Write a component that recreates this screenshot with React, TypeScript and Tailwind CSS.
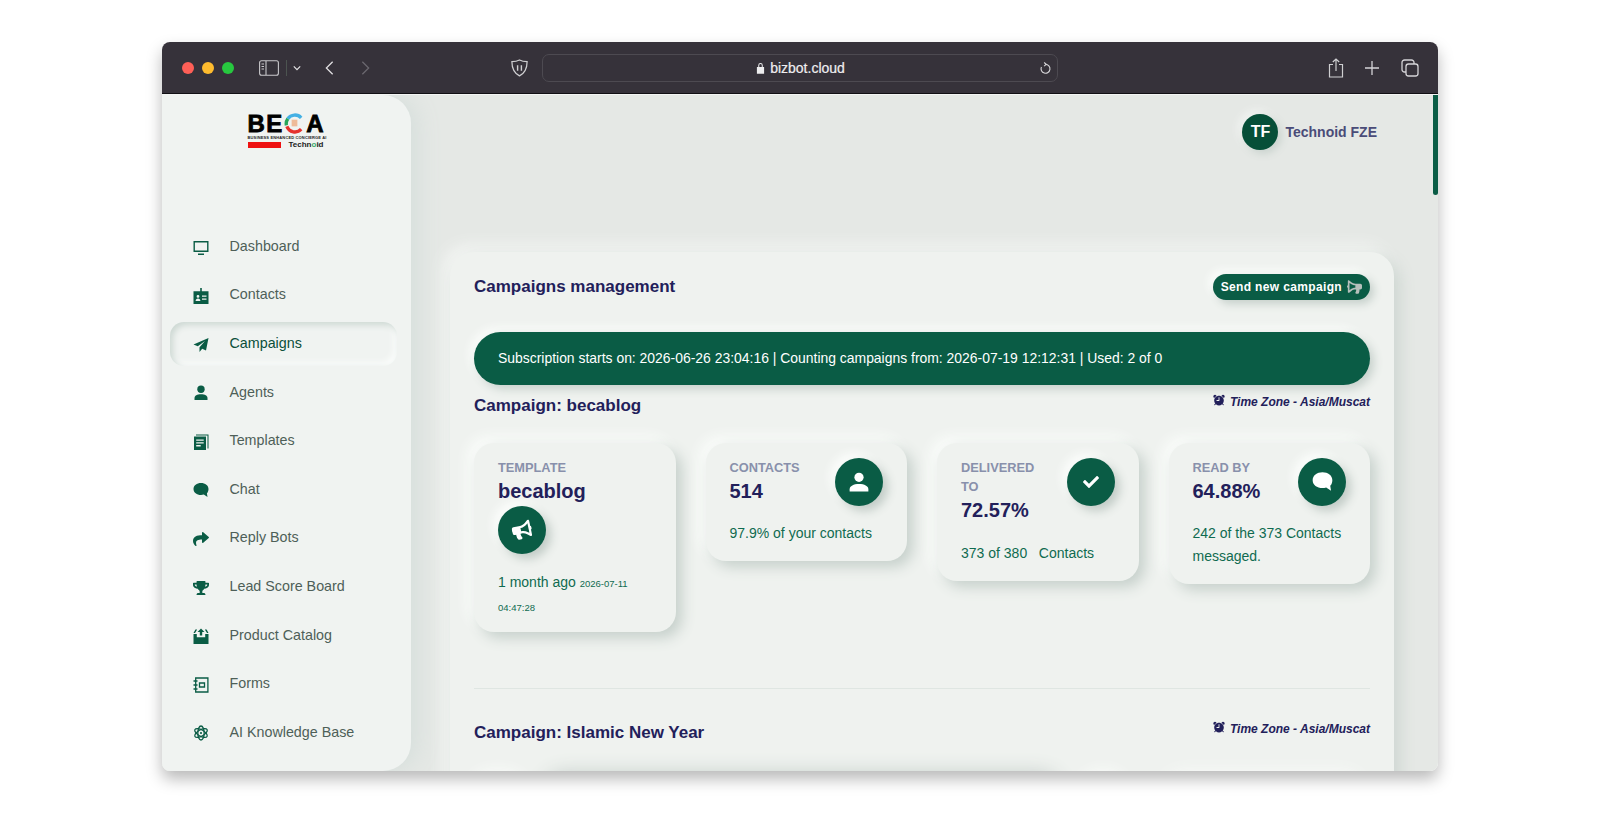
import React from "react";
import { FaShare, FaTrophy, FaBullhorn, FaCheck } from "react-icons/fa";
import { IoAlarm } from "react-icons/io5";

const cardShadow = "shadow-[6px_6px_14px_#c6d0cb,-6px_-6px_14px_#fbfdfb]";

// small monochrome nav icons, all on a 16 box
const DesktopIcon = () => (
  <svg viewBox="0 0 16 16" className="h-4 w-4 text-[#0a5c45]" fill="currentColor">
    <path d="M0.5 1h15v11h-15zM1.9 2.4v8.2h12.2V2.4zM5 13.6h6V15H5z" fillRule="evenodd" />
  </svg>
);
const BadgeIcon = () => (
  <svg viewBox="0 0 16 16" className="h-4 w-4 text-[#0a5c45]" fill="currentColor">
    <path
      fillRule="evenodd"
      d="M7.2 0h1.6v3.2H15.5V16H.5V3.2h6.7zM5 7a1.4 1.4 0 1 0 0 2.8A1.4 1.4 0 0 0 5 7zM2.6 13h4.8c0-1.6-1-2.5-2.4-2.5S2.6 11.400 2.600 13zM9 7.500v1.300h4.500V7.500zM9 10.500v1.300h4.500v-1.300z"
    />
  </svg>
);
const PlaneIcon = () => (
  <svg viewBox="0 0 16 16" className="h-4 w-4 text-[#0a5c45]" fill="currentColor">
    <path d="M15.500 1 .500 7.500l4.300 1.800L12 4 6.500 10.300V15l2.700-3.300 3.800 1.800z" />
  </svg>
);
const PersonIcon = () => (
  <svg viewBox="0 0 16 16" className="h-4 w-4 text-[#0a5c45]" fill="currentColor">
    <circle cx="8" cy="4.200" r="3.700" />
    <path d="M1.500 15v-2c0-2.400 2.600-3.800 6.500-3.800s6.500 1.400 6.500 3.800v2z" />
  </svg>
);
const DocsIcon = () => (
  <svg viewBox="0 0 16 16" className="h-4 w-4 text-[#0a5c45]" fill="currentColor">
    <path d="M3 .5h12.500V14.500h-1V1.500H3z" />
    <path
      fillRule="evenodd"
      d="M1 2.500h12V16H1zM3.200 5.500v1.300h7.500V5.500zM3.200 8.300v1.300h7.500V8.300zM3.200 11.100v1.300h4.500v-1.300z"
    />
  </svg>
);
const ChatIcon = ({ className = "h-4 w-4 text-[#0a5c45]" }: { className?: string }) => (
  <svg viewBox="0 0 16 16" className={className} fill="currentColor">
    <path d="M8 1C3.800 1 .500 3.500.500 7S3.800 13 8 13c.9 0 1.900-.1 2.800-.4l3.700 2.400-.6-3.700C15 10.200 15.500 8.700 15.500 7 15.500 3.500 12.200 1 8 1z" />
  </svg>
);
const BoxIcon = () => (
  <svg viewBox="0 0 16 16" className="h-4 w-4 text-[#0a5c45]" fill="currentColor">
    <path d="M8 .5 11.500 4H9.200v3.500H6.800V4H4.500zM.5 6h3.300v3.200h8.400V6h3.300v10H.500zM2.400 1.500h1.800L2 5H.500zM11.800 1.500h1.800L15.500 5H14z" />
  </svg>
);
const NotebookIcon = () => (
  <svg viewBox="0 0 16 16" className="h-4 w-4 text-[#0a5c45]" fill="none" stroke="currentColor" strokeWidth="1.300">
    <path d="M2.700 1h12.200v14H2.700z" />
    <path d="M.5 4h4M.5 8h4M.5 12h4" />
    <path d="M6.500 6h5v4h-5z" />
  </svg>
);
const AtomIcon = () => (
  <svg viewBox="0 0 16 16" className="h-4 w-4 text-[#0a5c45]" fill="none" stroke="currentColor" strokeWidth="1.300">
    <ellipse cx="8" cy="8" rx="7" ry="3.200" transform="rotate(30 8 8)" />
    <ellipse cx="8" cy="8" rx="7" ry="3.200" transform="rotate(-30 8 8)" />
    <ellipse cx="8" cy="8" rx="7" ry="3.200" transform="rotate(90 8 8)" />
    <circle cx="8" cy="8" r="1.100" fill="currentColor" stroke="none" />
  </svg>
);

const navItems = [
  { label: "Dashboard", icon: <DesktopIcon /> },
  { label: "Contacts", icon: <BadgeIcon /> },
  { label: "Campaigns", icon: <PlaneIcon />, active: true },
  { label: "Agents", icon: <PersonIcon /> },
  { label: "Templates", icon: <DocsIcon /> },
  { label: "Chat", icon: <ChatIcon /> },
  { label: "Reply Bots", icon: <FaShare className="h-4 w-4 text-[#0a5c45]" /> },
  { label: "Lead Score Board", icon: <FaTrophy className="h-4 w-4 text-[#0a5c45]" /> },
  { label: "Product Catalog", icon: <BoxIcon /> },
  { label: "Forms", icon: <NotebookIcon /> },
  { label: "AI Knowledge Base", icon: <AtomIcon /> },
];

const BrowserBar = () => (
  <div className="flex h-[52px] shrink-0 items-center border-b border-[#111014] bg-[#36323a] pl-[20px] pr-[19px]">
    <div className="flex gap-[8px]">
      <span className="h-3 w-3 rounded-full bg-[#fe5f57]" />
      <span className="h-3 w-3 rounded-full bg-[#febb2e]" />
      <span className="h-3 w-3 rounded-full bg-[#27c83f]" />
    </div>
    <svg viewBox="0 0 20 16" className="ml-[25px] h-[16px] w-[20px] text-[#c9c8cb]" fill="none" stroke="currentColor" strokeWidth="1.100">
      <rect x="0.600" y="0.800" width="18.800" height="14.400" rx="2" />
      <path d="M7 1v14" />
      <path d="M2.500 4h2.500M2.500 6.500h2.500M2.500 9h2.500" />
    </svg>
    <span className="ml-[7px] h-[16px] w-px bg-[#4c5450]" />
    <svg viewBox="0 0 10 6" className="ml-[6px] h-[6px] w-[8px] text-[#e4e3e5]" fill="none" stroke="currentColor" strokeWidth="1.500">
      <path d="M1 1l4 4 4-4" />
    </svg>
    <svg viewBox="0 0 10 16" className="ml-[24px] h-[16px] w-[9px] text-[#e2e1e3]" fill="none" stroke="currentColor" strokeWidth="1.400">
      <path d="M8.500 1 1.500 8l7 7" />
    </svg>
    <svg viewBox="0 0 10 16" className="ml-[27px] h-[16px] w-[9px] text-[#6b686f]" fill="none" stroke="currentColor" strokeWidth="1.400">
      <path d="M1.500 1l7 7-7 7" />
    </svg>
    <svg viewBox="0 0 20 20" className="ml-[140px] h-[20px] w-[19px] text-[#cfcfd1]" fill="none" stroke="currentColor" strokeWidth="1.300">
      <path d="M10 1.500c2.500 1.400 5 1.800 8 1.800 0 7-2.500 12-8 15-5.500-3-8-8-8-15 3 0 5.500-.4 8-1.800z" />
      <path d="M8 7v6M12 7v6" strokeWidth="1.500" />
    </svg>
    <div className="relative ml-[13px] flex h-[28px] w-[516px] items-center justify-center rounded-[7px] border border-[#4d4a51] pl-[1px] pt-[1px]">
      <svg viewBox="0 0 10 13" className="mr-[5px] h-[12px] w-[9px] text-[#ededee]" fill="currentColor">
        <path fillRule="evenodd" d="M1 5.500h8V13H1zM2.500 5.500V3.500a2.500 2.500 0 0 1 5 0v2H6.400V3.500a1.400 1.400 0 0 0-2.800 0v2z" />
      </svg>
      <span className="mt-[1px] font-['Liberation_Sans',sans-serif] text-[14px] font-medium text-[#efeef0] [-webkit-text-stroke:0.2px_#efeef0]">bizbot.cloud</span>
      <svg viewBox="0 0 14 14" className="absolute right-[5px] top-[7px] h-[13px] w-[13px] text-[#d5d4d7]" fill="none" stroke="currentColor" strokeWidth="1.200">
        <path d="M7 2.500a4.800 4.800 0 1 1-4.400 2.900" />
        <path d="M5.500 .5 7.800 2.500 5.500 4.500" />
      </svg>
    </div>
    <svg viewBox="0 0 16 20" className="ml-auto h-[20px] w-[16px] text-[#cfcfd1]" fill="none" stroke="currentColor" strokeWidth="1.200">
      <path d="M5 6.500H1.500v12.500h13V6.500H11" />
      <path d="M8 13V1M4.800 4 8 1l3.200 3" />
    </svg>
    <svg viewBox="0 0 14 14" className="ml-[21px] h-[14px] w-[14px] text-[#d5d4d7]" fill="none" stroke="currentColor" strokeWidth="1.300">
      <path d="M7 0v14M0 7h14" />
    </svg>
    <svg viewBox="0 0 18 18" className="ml-[22px] h-[18px] w-[18px] text-[#d5d4d7]" fill="none" stroke="currentColor" strokeWidth="1.300">
      <rect x="5" y="5" width="12" height="12" rx="2.500" />
      <path d="M5 13H3.500A2.500 2.500 0 0 1 1 10.500v-7A2.500 2.500 0 0 1 3.500 1h7A2.500 2.500 0 0 1 13 3.500V5" />
    </svg>
  </div>
);

const Logo = () => (
  <div className="flex w-[76px] flex-col font-['Liberation_Sans',sans-serif]">
    <div className="flex h-[21px] items-center justify-between text-[24px] font-bold leading-none text-black [-webkit-text-stroke:0.8px_#000]">
      <span>B</span>
      <span>E</span>
      <svg viewBox="0 0 22 22" className="h-[21px] w-[21px]" fill="none" strokeWidth="3.500">
        <path d="M18 5A9 9 0 0 0 4 6" stroke="#44b0e4" />
        <path d="M4 6a9 9 0 0 0-1.500 7" stroke="#26a65b" />
        <path d="M3 14a9 9 0 0 0 15 3" stroke="#e5322d" />
        <rect x="8" y="7" width="6" height="7" fill="#eebb99" stroke="none" />
      </svg>
      <span>A</span>
    </div>
    <div className="mt-[1px] whitespace-nowrap text-[4px] font-bold uppercase leading-[5px] tracking-[0.15px] text-[#222]">Business Enhanced Concierge AI</div>
    <div className="mt-[1px] flex items-center justify-between">
      <span className="h-[6px] w-[33px] bg-[#ee1111]" />
      <span className="text-[8px] font-bold leading-[8px] text-[#222]">
        Techn<span className="text-[#3ba76a]">o</span>id
      </span>
    </div>
  </div>
);

const Sidebar = () => (
  <aside className="relative z-10 flex h-full w-[249px] shrink-0 flex-col rounded-r-[28px] bg-[#f0f3f1] font-['Liberation_Sans',sans-serif] shadow-[6px_0_24px_#d5dedb]">
    <div className="flex h-[129.500px] shrink-0 justify-center pr-[2px] pt-[18px]">
      <Logo />
    </div>
    <nav className="flex flex-col gap-[4.600px] px-[8px]">
      {navItems.map((item) => (
        <a
          key={item.label}
          className={`flex h-[44px] w-[227px] items-center rounded-[14px] pl-[23px] text-[14.300px] ${
            item.active
              ? "bg-[#f0f3f1] text-[#0a4f3a] shadow-[inset_3px_3px_6px_#cdd8d3,inset_-3px_-3px_6px_#fbfdfc]"
              : "text-[#4e5f58]"
          }`}
        >
          <span className="mt-[2px] flex w-[16px] justify-center">{item.icon}</span>
          <span className="ml-[20.500px]">{item.label}</span>
        </a>
      ))}
    </nav>
  </aside>
);

const CircleIcon = ({ children }: { children: React.ReactNode }) => (
  <span className="flex h-[48px] w-[48px] shrink-0 items-center justify-center rounded-full bg-[#0a5c45] text-white shadow-[5px_5px_10px_#c2ccc7,-5px_-5px_10px_#fbfdfb]">
    {children}
  </span>
);

const Label = ({ children }: { children: React.ReactNode }) => (
  <div className="text-[12.800px] font-bold uppercase leading-[19px] text-[#8890ab]">{children}</div>
);
const Value = ({ children }: { children: React.ReactNode }) => (
  <div className="text-[20px] font-bold leading-[29px] text-[#22205a]">{children}</div>
);

const TimeZone = () => (
  <div className="flex items-center text-[12px] font-bold italic text-[#22205a]">
    <IoAlarm className="mr-[4px] mt-[-4px] h-[14px] w-[14px]" />
    Time Zone - Asia/Muscat
  </div>
);

const CampaignHeading = ({ name }: { name: string }) => (
  <div className="flex items-start justify-between">
    <h3 className="text-[17px] font-bold leading-[26px] text-[#22205a]">Campaign: {name}</h3>
    <TimeZone />
  </div>
);

const StatRow = () => (
  <div className="mt-[24px] grid grid-cols-4 items-start gap-[30px]">
    <div className={`rounded-[20px] bg-[#eff2ef] px-[24px] pb-[13px] pt-[14.500px] ${cardShadow}`}>
      <Label>Template</Label>
      <Value>becablog</Value>
      <CircleIcon>
        <FaBullhorn className="h-[20px] w-[20px] -rotate-[12deg]" />
      </CircleIcon>
      <div className="mt-[17px] text-[14px] leading-[23px] text-[#0f6b50]">
        1 month ago <span className="text-[9.500px]">2026-07-11</span>
        <br />
        <span className="text-[9.500px]">04:47:28</span>
      </div>
    </div>
    <div className={`rounded-[20px] bg-[#eff2ef] px-[24px] pb-[16px] pt-[14.500px] ${cardShadow}`}>
      <div className="flex justify-between">
        <div>
          <Label>Contacts</Label>
          <Value>514</Value>
        </div>
        <CircleIcon>
          <svg viewBox="0 0 16 16" className="h-[20px] w-[20px]" fill="currentColor">
            <circle cx="8" cy="4.200" r="3.700" />
            <path d="M.5 15.500v-1.700c0-2.600 3.200-4.200 7.500-4.200s7.500 1.600 7.500 4.200v1.700z" />
          </svg>
        </CircleIcon>
      </div>
      <div className="mt-[16px] text-[14px] leading-[23px] text-[#0f6b50]">97.9% of your contacts</div>
    </div>
    <div className={`rounded-[20px] bg-[#eff2ef] px-[24px] pb-[16px] pt-[14.500px] ${cardShadow}`}>
      <div className="flex justify-between">
        <div className="w-[90px]">
          <Label>Delivered To</Label>
          <Value>72.57%</Value>
        </div>
        <CircleIcon>
          <FaCheck className="h-[16px] w-[16px]" />
        </CircleIcon>
      </div>
      <div className="mt-[17px] whitespace-pre text-[14px] leading-[23px] text-[#0f6b50]">373 of 380   Contacts</div>
    </div>
    <div className={`rounded-[20px] bg-[#eff2ef] px-[24px] pb-[16px] pt-[14.500px] ${cardShadow}`}>
      <div className="flex justify-between">
        <div>
          <Label>Read By</Label>
          <Value>64.88%</Value>
        </div>
        <CircleIcon>
          <ChatIcon className="h-[21px] w-[21px]" />
        </CircleIcon>
      </div>
      <div className="mt-[16px] text-[14px] leading-[23px] text-[#0f6b50]">242 of the 373 Contacts messaged.</div>
    </div>
  </div>
);

// top edge of the next campaign's cards, only their shadows reach into view
const NextRow = () => (
  <div className="mt-[31px] flex h-[120px]">
    <div className="ml-[2px] h-full w-[54px] rounded-[20px] shadow-[-5px_-6px_16px_#fbfdfb]" />
    <div className="ml-[14px] h-full w-[516px] rounded-[20px] shadow-[0_-4px_20px_#c4cdc9]" />
    <div className="ml-[24px] h-full w-[46px] rounded-[20px] shadow-[-4px_-6px_16px_#fbfdfb]" />
    <div className="ml-[38px] h-full w-[200px] rounded-[20px] shadow-[-5px_-6px_16px_#f8faf8]" />
  </div>
);

export default function App() {
  return (
    <div className="h-[814px] w-[1600px] overflow-hidden bg-white pl-[162px] pt-[42px]">
      <div className="flex h-[729px] w-[1276px] flex-col overflow-hidden rounded-[8px] shadow-[0_8px_16px_rgba(0,0,0,0.28)]">
        <BrowserBar />
        <div className="relative flex min-h-0 flex-1 overflow-hidden border-t border-[#f4f5f4] bg-[#e5e8e5] font-['Liberation_Sans',sans-serif]">
          <Sidebar />
          <main className="min-w-0 flex-1 overflow-hidden pl-[39px] pr-[44px]">
            <header className="flex h-[157px] items-start justify-end pr-[17px] pt-[19px]">
              <div className="flex items-center gap-[7px]">
                <span className="flex h-[36px] w-[36px] items-center justify-center rounded-full bg-[#064f38] text-[16px] font-bold text-white shadow-[3px_3px_8px_#c6d0cb,-3px_-3px_8px_#f5f7f5]">
                  TF
                </span>
                <span className="text-[14px] font-bold text-[#4a4c78]">Technoid FZE</span>
              </div>
            </header>
            <section className="rounded-t-[24px] bg-[#eff2ef] px-[24px] shadow-[6px_6px_16px_#cdd6d1,-6px_-6px_16px_#f5f7f5]">
              <div className="mb-[10px] flex h-[70px] items-center justify-between">
                <h2 className="text-[17px] font-bold text-[#22205a]">Campaigns management</h2>
                <button className="flex h-[26px] items-center rounded-full bg-[#0a5c45] pl-[8px] pr-[8px] text-[12px] font-bold tracking-[0.35px] text-white shadow-[4px_4px_8px_#c6d0cb,-4px_-4px_8px_#fbfdfb]">
                  Send new campaign
                  <FaBullhorn className="ml-[5px] h-[14px] w-[15px] scale-x-[-1] text-[#b6bfbb]" />
                </button>
              </div>
              <div className="flex h-[53px] items-center rounded-full bg-[#0a5c45] px-[24px] text-[13.930px] text-white shadow-[4px_4px_10px_#c6d0cb,-4px_-4px_10px_#fbfdfb]">
                Subscription starts on: 2026-06-26 23:04:16 | Counting campaigns from: 2026-07-19 12:12:31 | Used: 2 of 0
              </div>
              <div className="mt-[8px]">
                <CampaignHeading name="becablog" />
                <StatRow />
              </div>
              <hr className="mt-[56px] border-t border-[#dfe6e2]" />
              <div className="mt-[31px]">
                <CampaignHeading name="Islamic New Year" />
                <NextRow />
              </div>
            </section>
          </main>
          <div className="absolute right-0 top-0 h-[100px] w-[5px] rounded-b-full bg-[#0a5c45]" />
        </div>
      </div>
    </div>
  );
}
